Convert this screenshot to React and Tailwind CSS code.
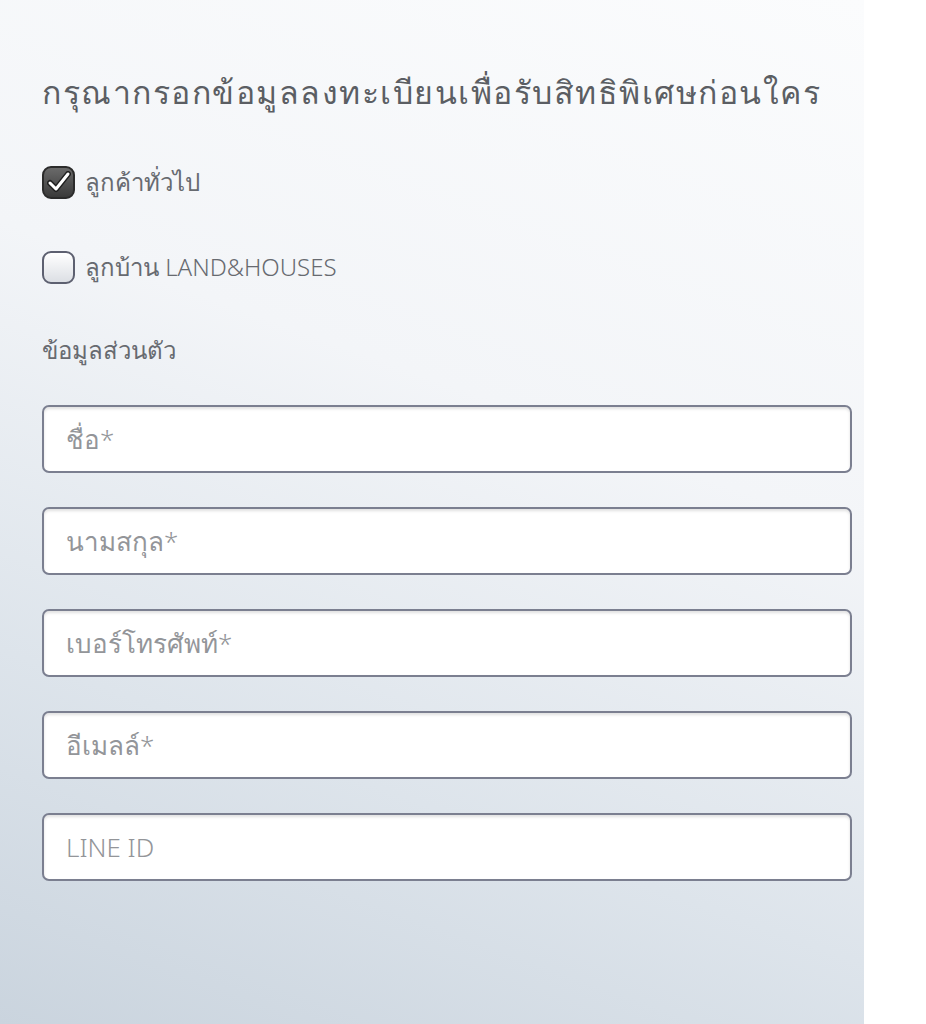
import { useState } from 'react'

const fields = ['ชื่อ*', 'นามสกุล*', 'เบอร์โทรศัพท์*', 'อีเมลล์*', 'LINE ID']

function Check({ checked, onClick }) {
  return (
    <button
      type="button"
      onClick={onClick}
      className={`w-[33px] h-[33px] rounded-[9px] border-2 flex items-center justify-center shrink-0 ${checked ? 'border-[#2b2b2b] bg-[linear-gradient(180deg,#6a6a6a_0%,#3a3a3a_100%)]' : 'border-[#5d6070] bg-[linear-gradient(180deg,#ffffff_0%,#dcdfe4_100%)]'}`}
    >
      {checked && (
        <svg width="24" height="22" viewBox="0 0 24 22">
          <path d="M3 12 L9 18 L21 3" fill="none" stroke="#1f1f1f" strokeWidth="6" strokeLinecap="round" strokeLinejoin="round" />
          <path d="M3 12 L9 18 L21 3" fill="none" stroke="#ffffff" strokeWidth="3" strokeLinecap="round" strokeLinejoin="round" />
        </svg>
      )}
    </button>
  )
}

export default function App() {
  const [general, setGeneral] = useState(true)
  const [owner, setOwner] = useState(false)

  return (
    <div className="min-h-screen w-full bg-white flex font-['Noto_Sans',sans-serif] font-light">
      <div className="w-[864px] min-h-[1024px] bg-[linear-gradient(200deg,#fbfcfd_0%,#f3f5f8_40%,#dde4eb_72%,#cad4de_100%)] px-[42px] pt-[70px] pb-10 flex flex-col">
        <h1 className="text-[32px] leading-[44px] text-[#5b5e63] font-light tracking-[1.5px] whitespace-nowrap">
          กรุณากรอกข้อมูลลงทะเบียนเพื่อรับสิทธิพิเศษก่อนใคร
        </h1>

        <div className="mt-[50px] h-[36px] flex items-center gap-[10px]">
          <Check checked={general} onClick={() => setGeneral(!general)} />
          <span className="text-[24px] text-[#676a70]">ลูกค้าทั่วไป</span>
        </div>

        <div className="mt-[49px] h-[36px] flex items-center gap-[10px]">
          <Check checked={owner} onClick={() => setOwner(!owner)} />
          <span className="text-[24px] text-[#676a70]">ลูกบ้าน LAND&amp;HOUSES</span>
        </div>

        <div className="mt-[47px] h-[36px] leading-[36px] text-[24px] text-[#676a70]">ข้อมูลส่วนตัว</div>

        <div className="mt-[37px] flex flex-col gap-[34px] w-[810px]">
          {fields.map(f => (
            <input
              key={f}
              type="text"
              placeholder={f}
              className="h-[68px] w-full rounded-[7px] border-2 border-[#7b7f90] bg-white px-[22px] text-[26px] font-light text-[#555] placeholder:text-[#939599] outline-none shadow-[inset_0_2px_3px_rgba(0,0,0,0.12)]"
            />
          ))}
        </div>
      </div>
    </div>
  )
}
